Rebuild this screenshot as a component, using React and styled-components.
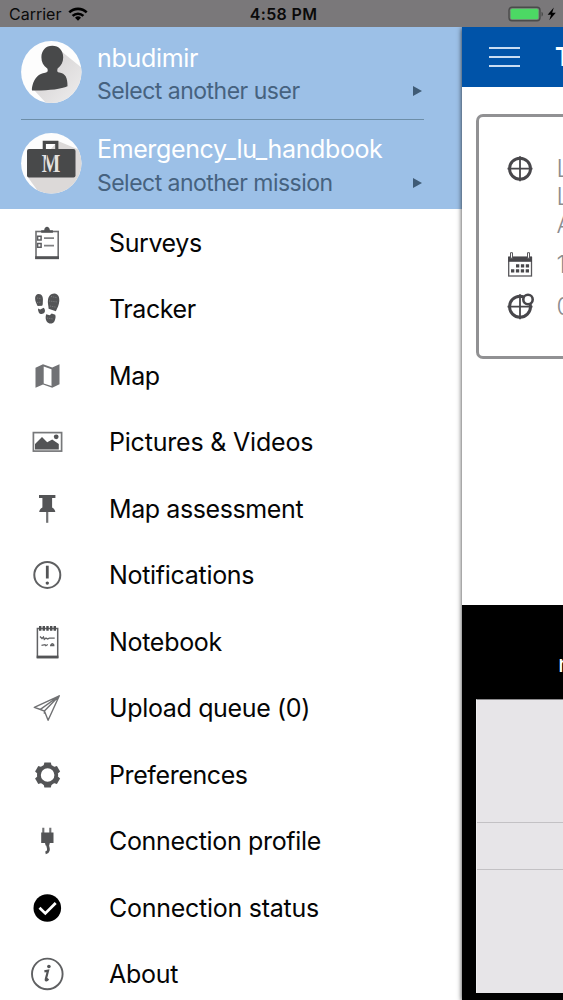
import React from 'react';
import styled, { createGlobalStyle } from 'styled-components';

const GlobalStyle = createGlobalStyle`
    * {
        box-sizing: border-box;
    }
    body {
        margin: 0;
        background: #fff;
        font-family: Inter, "Liberation Sans", sans-serif;
    }
`;

const Screen = styled.div`
    width: 563px;
    height: 1000px;
    display: flex;
    flex-direction: column;
    overflow: hidden;
`;

/* status bar */
const StatusBar = styled.header`
    flex: none;
    height: 27px;
    padding: 1px 5px 0 9px;
    display: grid;
    grid-template-columns: 1fr auto 1fr;
    align-items: center;
    background: #7a787a;
    color: #0a0a0a;
    font-size: 16px;
`;
const Carrier = styled.div`
    display: flex;
    align-items: center;
    gap: 7px;
`;
const Clock = styled.div`
    font-weight: 600;
    letter-spacing: 0.35px;
`;
const Power = styled.div`
    display: flex;
    justify-content: flex-end;
`;

const Content = styled.div`
    flex: 1;
    display: flex;
    min-height: 0;
`;

/* side menu */
const Drawer = styled.nav`
    flex: none;
    width: 462px;
    background: #fff;
`;
const Account = styled.div`
    height: 182px;
    padding: 14px 38px 0 21px;
    background: #9cc0e7;
`;
const Profile = styled.div`
    display: flex;
    height: ${props => props.height}px;
    padding-top: ${props => props.top || 0}px;
    border-bottom: ${props => props.divider ? '1.5px solid #6d8ea8' : 'none'};
`;
const Details = styled.div`
    flex: 1;
    padding-left: 15px;
    white-space: nowrap;
`;
const Name = styled.div`
    height: 33px;
    padding-top: ${props => props.top || 0}px;
    line-height: 33px;
    color: #fff;
    font-size: 25px;
    letter-spacing: ${props => props.spacing}px;
`;
const Switch = styled.div`
    display: flex;
    justify-content: space-between;
    align-items: center;
    height: 33px;
    padding-right: 2px;
    color: #46627f;
    font-size: 23px;
    letter-spacing: ${props => props.spacing}px;
`;
const Arrow = styled.span`
    border-left: 9px solid #3f5b76;
    border-top: 5px solid transparent;
    border-bottom: 5px solid transparent;
`;
const Menu = styled.ul`
    list-style: none;
    margin: 0;
    padding: 0.25px 0 0;
`;
const MenuItem = styled.li`
    display: flex;
    align-items: center;
    gap: 44px;
    height: 66.5px;
    padding-left: 29px;
`;
const Label = styled.span`
    color: #050505;
    font-size: 25px;
    line-height: 30px;
    letter-spacing: ${props => props.spacing}px;
    white-space: nowrap;
`;

/* page pushed to the right by the menu */
const Page = styled.main`
    flex: none;
    width: 375px;
    display: flex;
    flex-direction: column;
    background: #fff;
    box-shadow: 0 1px 5px 0 rgba(0, 0, 0, 0.8);
    clip-path: inset(0 0 0 -12px);
`;
const AppBar = styled.div`
    flex: none;
    display: flex;
    align-items: center;
    gap: 35px;
    height: 60px;
    padding-left: 27px;
    background: #0053a8;
    color: #fff;
    font-size: 25px;
    font-weight: 700;
`;
const Burger = styled.div`
    width: 31px;
    height: 20px;
    border-top: 2px solid #c9dcf2;
    border-bottom: 2px solid #c9dcf2;
    display: flex;
    align-items: center;

    &::before {
        content: '';
        width: 100%;
        height: 2px;
        background: #c9dcf2;
    }
`;
const Card = styled.section`
    flex: none;
    height: 245px;
    margin: 27px 14px 0;
    padding: 38px 0 0 26.5px;
    border: 3px solid #919193;
    border-radius: 7px;
    overflow: hidden;
`;
const Field = styled.div`
    display: flex;
    gap: 21px;
    height: ${props => props.height}px;
    color: #8c8c8f;
    font-size: 24px;
    font-weight: 300;
    line-height: 28px;
    white-space: nowrap;
`;
const Bottom = styled.section`
    flex: 1;
    display: flex;
    flex-direction: column;
    margin-top: 246px;
    padding: 0 14px 7px;
    background: #000;
`;
const Caption = styled.div`
    height: 94px;
    padding: 44px 0 0 82px;
    color: #fff;
    font-size: 24px;
    line-height: 30px;
`;
const Panel = styled.div`
    flex: 1;
    display: flex;
    flex-direction: column;
    background: #e7e5e8;
    border-left: 1px solid #f0f0f1;
    border-top: 1px solid #8b8a8c;
`;
const PanelRow = styled.div`
    height: ${props => props.height}px;
    border-bottom: 1px solid #c3c1c4;
`;

const G = '#535456';

const Icon = ({ children }) => (
    <svg width="36" height="36" viewBox="0 0 36 36" fill="none">{children}</svg>
);

const Survey = () => (
    <Icon>
        <rect x="7" y="6.500" width="22.200" height="26.900" stroke="#6e6f71" strokeWidth="1.600" />
        <path d="M6.200 31.200h23.800V34H6.200z" fill={G} />
        <path d="M12.200 7.800V5.300h3c.2-4.800 5.400-4.800 5.700 0h3v2.500z" fill={G} />
        <path d="M8.600 11.300h3.500V15H8.600zM8.600 18.600h3.500v3.700H8.600z" stroke="#5c5d60" strokeWidth="1.500" />
        <path d="M15 13.200h10M15 20.700h10" stroke="#808183" strokeWidth="1.700" />
    </Icon>
);

const Feet = () => (
    <Icon>
        <path d="M9.500 2.900c3.400-.3 4.800 3.100 4.400 6.600-.2 2.200.2 4-.7 5.300l-4.600.3C7.600 12.600 5.900 10 6.100 7c.1-2.300 1.400-4 3.400-4.100z" fill={G} />
        <path d="M9 17.500l2.200.9 3.500-1.700c1.200 1.400 1.700 3 .9 4.600-1.200 2.300-4.700 2.200-5.800.1-.6-1.300-.9-2.500-.8-3.900z" fill={G} />
        <path d="M25.500 2.600c3.500.2 5 3.500 4.800 7.300-.2 4-2 6.900-3.400 10.400l-7.300-2.500c0-3.100-1.200-5.800-.6-9 .5-3.400 3-6.400 6.500-6.200z" fill={G} />
        <path d="M17.200 23.300l3.500.9 2-1.800 3.500 1.400c.8 1.700.3 4.200-.6 6.100-1.500 3.300-5.700 3.600-7.700.9-1.500-2.300-1.600-4.800-.7-7.500z" fill={G} />
        <path d="M22 5.500l6 1.200M20 10l8.500 1M21 15l6 1.200M18 27l6 1M8 7l4 .6M8 11.500l4-.4" stroke="#858688" strokeWidth=".8" strokeDasharray="1.200 1" />
    </Icon>
);

const MapIcon = () => (
    <Icon>
        <path d="M6.500 9.700l7.500-3.400 9.200 3.100 7.300-3.200v20l-7.300 3.500-9.200-3.200-7.500 3.200zM14.700 8.600v16.800l7.800 2.600V11.200z" fill="#717275" fillRule="evenodd" />
    </Icon>
);

const Picture = () => (
    <Icon>
        <rect x="4.400" y="8.600" width="28.200" height="18.500" stroke="#77787a" strokeWidth="1.700" />
        <path d="M6 25.500v-5.600l7-7 5.200 5.300 5-2.700 6.600 4.500v5.500z" fill={G} />
        <circle cx="27.200" cy="12.800" r="2.400" fill={G} />
    </Icon>
);

const Pin = () => (
    <Icon>
        <path d="M10 4h16.400v3.100h-3.300v9.400c1.800 1 3 2.400 3.200 4.600H10.200c.2-2.200 1.400-3.600 3.200-4.600V7.100H10z" fill={G} />
        <path d="M18.200 21v10.800" stroke="#707173" strokeWidth="2.200" />
    </Icon>
);

const Alert = () => (
    <Icon>
        <circle cx="18.300" cy="17.900" r="13" stroke="#5f6062" strokeWidth="2" />
        <path d="M18.300 8.700v12.800" stroke={G} strokeWidth="2.800" />
        <circle cx="18.300" cy="26.100" r="1.700" fill={G} />
    </Icon>
);

const Notebook = () => (
    <Icon>
        <rect x="8.400" y="4.500" width="20.300" height="29" stroke="#606163" strokeWidth="1.500" />
        <path d="M7.700 31.600h21.700v2.700H7.700z" fill={G} />
        <path d="M11.200 2v4.800m3.600-4.800v4.800m3.700-4.800v4.800m3.700-4.800v4.800m3.600-4.800v4.800" stroke="#4f5052" strokeWidth="2.400" />
        <path d="M11 12.500l2 2 1.500-1.500.8 2.500 1.700-1.400 1.700.9 1.500-.8h5.500M12.500 21.300l3.500-.6.8 1 2-1.200M21.500 21.500c1.500-2.600 3.500-2 3.300 0H21" stroke="#606163" strokeWidth="1.300" />
    </Icon>
);

const Plane = () => (
    <Icon>
        <path d="M30.300 5.800L5.300 17.400l6.200 2.100 3.900 1.600 3.700 9.200zM11.400 19.400L30.300 5.800 15.400 21.100v2.700" stroke="#707173" strokeWidth="1.400" strokeLinejoin="round" />
    </Icon>
);

const Gear = () => (
    <Icon>
        <g transform="translate(18.600 18)">
            <circle r="8.700" stroke={G} strokeWidth="3.800" />
            {[0, 60, 120, 180, 240, 300].map(angle => (
                <path key={angle} d="M-4-9.300l.8-3.300h6.400l.8 3.300z" fill={G} transform={`rotate(${angle})`} />
            ))}
        </g>
    </Icon>
);

const Plug = () => (
    <Icon>
        <path d="M14.300 4.700v6M21.300 4.700v6" stroke="#707173" strokeWidth="2.100" />
        <path d="M12.200 9.500h12.300V20h-3.700l-.6 2.500h-3.600L16 20h-3.800z" fill={G} />
        <path d="M18.500 21c0 3 1.500 4 .8 6.500-.3 1.300-.8 2-2.800 2.400" stroke={G} strokeWidth="2.800" />
    </Icon>
);

const Check = () => (
    <Icon>
        <circle cx="18.300" cy="18" r="13.800" fill="#000" />
        <path d="M10.500 17.800l5.800 5.600 10.400-10.400" stroke="#fff" strokeWidth="2.800" />
    </Icon>
);

const Info = () => (
    <Icon>
        <circle cx="18.300" cy="17.900" r="15.300" stroke="#5f6062" strokeWidth="1.900" />
        <circle cx="19.900" cy="10.500" r="1.800" fill={G} />
        <path d="M15.400 15.400l3.600-.7-2.200 8.600c-.3 1.600.8 1.300 2.600-.4" stroke={G} strokeWidth="2.200" />
    </Icon>
);

const Wifi = () => (
    <svg width="20" height="14" viewBox="0 0 20 14" fill="none" stroke="#000" strokeWidth="2.600">
        <path d="M1.300 5.400a12.600 12.600 0 0 1 17.400 0M4.600 8.900a7.800 7.800 0 0 1 10.800 0" />
        <path d="M10 13.800l-3-3.100a4.300 4.300 0 0 1 6 0z" fill="#000" stroke="none" />
    </svg>
);

const Battery = () => (
    <svg width="50" height="16" viewBox="0 0 50 16">
        <rect x="1" y="1.200" width="31" height="13.600" rx="3" fill="none" stroke="#4a4b4a" strokeWidth="1.400" />
        <rect x="2.600" y="2.800" width="27.800" height="10.400" rx="1.500" fill="#4cd964" />
        <path d="M33.500 5.700c2 .8 2 4 0 4.800z" fill="#4a4b4a" />
        <path d="M45.800 1.600l-6.200 7.100h3.400l-1.700 5.500 6.500-7.500h-3.600z" fill="#000" />
    </svg>
);

const UserAvatar = () => (
    <svg width="61" height="62" viewBox="0 0 61 62">
        <defs>
            <clipPath id="user"><ellipse cx="30.300" cy="31" rx="30.200" ry="31" /></clipPath>
            <linearGradient id="userShade" x1="0" y1="0" x2="1" y2="1">
                <stop offset="0" stopColor="#cfcccd" />
                <stop offset="1" stopColor="#efeeee" />
            </linearGradient>
        </defs>
        <g clipPath="url(#user)">
            <path d="M0 0h61v62H0z" fill="#fdfdfd" />
            <path d="M40 10l21 17v35H25L13 49z" fill="url(#userShade)" />
        </g>
        <path d="M31.300 4.700c6.600 0 10.900 4.800 10.900 11.500 0 5-2 8.700-5.600 11.200-.8 2.500-.3 3.900 1.700 4.200 6 .9 8.300 4.800 8.200 13.700-6.500 3-20 4.500-35.500 4.200-.3-1.500 0-3.300.6-5.500 1.900-7.100 6.300-11.500 12.600-12.300 2.600-.4 3.200-1.700 2.100-4.300-3.900-2.600-5.900-6.300-5.900-11.200 0-6.700 4.300-11.500 10.900-11.500z" fill="#48494a" />
    </svg>
);

const MissionAvatar = () => (
    <svg width="61" height="61" viewBox="0 0 61 61">
        <defs>
            <clipPath id="mission"><circle cx="30.300" cy="30.300" r="30.200" /></clipPath>
        </defs>
        <g clipPath="url(#mission)">
            <path d="M0 0h61v61H0z" fill="#fdfdfd" />
            <path d="M37 8l24 10v43H19L6 43z" fill="#dcd9d8" />
        </g>
        <path d="M23.300 17V9.300h12.500V17" fill="none" stroke="#48494a" strokeWidth="3.200" />
        <rect x="6" y="16" width="48.500" height="28.500" rx="2" fill="#48494a" />
        <text x="30" y="38.500" textAnchor="middle" fontFamily="Liberation Serif, serif" fontSize="26" fontWeight="700" textLength="18.500" lengthAdjust="spacingAndGlyphs" fill="#e4e2e1">M</text>
        <path d="M25.600 21v17.500M33.100 21v17.500" stroke="#48494a" strokeWidth=".7" />
    </svg>
);

const Target = ({ pinned }) => (
    <svg width="30" height="28" viewBox="0 0 30 28" fill="none" stroke="#48474b">
        <circle cx="14" cy="13.700" r="10.500" strokeWidth="3" />
        <path d="M14 1.200v25M1.500 13.700h25" strokeWidth="1.800" />
        {pinned && <circle cx="22" cy="6.500" r="4.700" fill="#fff" strokeWidth="2.600" />}
    </svg>
);

const Calendar = () => (
    <svg width="30" height="28" viewBox="0 0 30 28" fill="none" stroke="#58575b">
        <rect x="2.700" y="6.500" width="22.800" height="18.500" strokeWidth="1.300" />
        <path d="M2.200 5.500h23.800v5.300H2.200z" fill="#48474b" stroke="none" />
        <path d="M4.500 1.700h2v5.500h-2zM21.500 1.700h2v5.500h-2z" fill="#fff" strokeWidth="1" />
        <path d="M10 14.800h14M5 19.800h19" stroke="#48474b" strokeWidth="3.300" strokeDasharray="3.300 1.600" />
    </svg>
);

const items = [
    { label: 'Surveys', icon: Survey, spacing: -0.4 },
    { label: 'Tracker', icon: Feet, spacing: -0.4 },
    { label: 'Map', icon: MapIcon, spacing: -0.4 },
    { label: 'Pictures & Videos', icon: Picture, spacing: -0.2 },
    { label: 'Map assessment', icon: Pin, spacing: -0.4 },
    { label: 'Notifications', icon: Alert, spacing: -0.3 },
    { label: 'Notebook', icon: Notebook, spacing: -0.3 },
    { label: 'Upload queue (0)', icon: Plane, spacing: -0.35 },
    { label: 'Preferences', icon: Gear, spacing: -0.4 },
    { label: 'Connection profile', icon: Plug, spacing: -0.33 },
    { label: 'Connection status', icon: Check, spacing: -0.26 },
    { label: 'About', icon: Info, spacing: -0.3 },
];

const App = () => (
    <Screen>
        <GlobalStyle />
        <StatusBar>
            <Carrier>Carrier <Wifi /></Carrier>
            <Clock>4:58 PM</Clock>
            <Power><Battery /></Power>
        </StatusBar>
        <Content>
            <Drawer>
                <Account>
                    <Profile height={78.500} divider>
                        <UserAvatar />
                        <Details>
                            <Name spacing={-0.3} top={1}>nbudimir</Name>
                            <Switch spacing={-0.5}>Select another user <Arrow /></Switch>
                        </Details>
                    </Profile>
                    <Profile height={90} top={13.500}>
                        <MissionAvatar />
                        <Details>
                            <Name spacing={-0.38}>Emergency_lu_handbook</Name>
                            <Switch spacing={-0.53}>Select another mission <Arrow /></Switch>
                        </Details>
                    </Profile>
                </Account>
                <Menu>
                    {items.map(item => (
                        <MenuItem key={item.label}>
                            <item.icon />
                            <Label spacing={item.spacing}>{item.label}</Label>
                        </MenuItem>
                    ))}
                </Menu>
            </Drawer>
            <Page>
                <AppBar><Burger />T</AppBar>
                <Card>
                    <Field height={96}>
                        <Target />
                        <div>L<br />L<br />A</div>
                    </Field>
                    <Field height={42}>
                        <Calendar />
                        <div>1</div>
                    </Field>
                    <Field height={42}>
                        <Target pinned />
                        <div>0</div>
                    </Field>
                </Card>
                <Bottom>
                    <Caption>n</Caption>
                    <Panel>
                        <PanelRow height={123} />
                        <PanelRow height={47} />
                    </Panel>
                </Bottom>
            </Page>
        </Content>
    </Screen>
);

export default App;
